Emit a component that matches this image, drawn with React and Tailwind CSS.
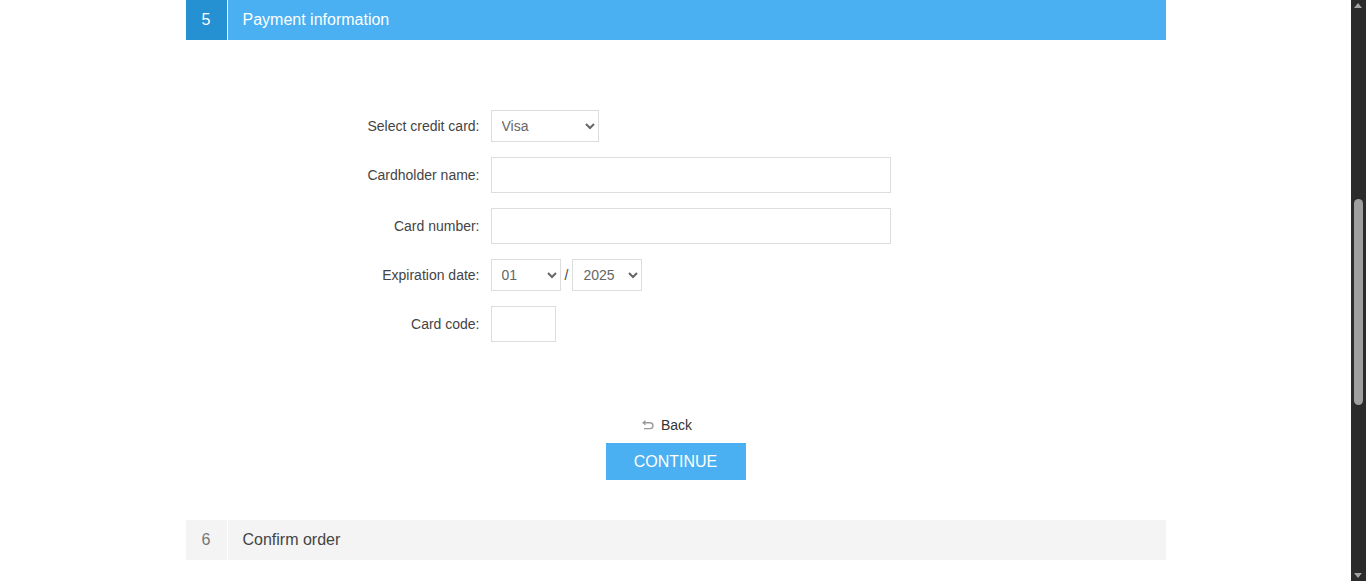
import React from 'react';

const labelCls = 'w-[305px] pr-[11px] text-right text-[14px] text-[#444]';
const inputCls = 'h-[36px] border border-[#ddd] bg-white px-2 text-[14px] text-[#444] outline-none';
const selectCls = 'h-[32px] border border-[#ddd] bg-white pl-[6px] text-[14px] text-[#666] outline-none';

const FormRow = ({ label, children }) => (
  <div className="flex items-center">
    <label className={labelCls}>{label}</label>
    {children}
  </div>
);

const BackIcon = () => (
  <svg width="12" height="10" viewBox="0 0 12 10" fill="none" stroke="#999" strokeWidth="1.4">
    <path d="M3.5 0.8 L1.2 2.8 L3.5 4.8" />
    <path d="M1.2 2.8 H8 A2.9 2.9 0 0 1 8 8.6 H2" />
  </svg>
);

const Scrollbar = () => (
  <div className="relative w-[15px] shrink-0 bg-[#2b2b2b]">
    <div className="absolute left-[3px] top-[3px] h-0 w-0 border-x-[4.5px] border-b-[5px] border-x-transparent border-b-[#a3a3a3]" />
    <div className="absolute left-[3px] top-[199px] h-[206px] w-[9px] rounded-[5px] bg-[#9f9f9f]" />
    <div className="absolute bottom-[3px] left-[3px] h-0 w-0 border-x-[4.5px] border-t-[5px] border-x-transparent border-t-[#a3a3a3]" />
  </div>
);

export default function App() {
  return (
    <div className="flex h-[581px] w-full overflow-hidden bg-white" style={{ fontFamily: '"Liberation Sans", Arial, sans-serif' }}>
      <div className="flex-1">
        <div className="mx-auto w-[980px]">
          {/* active step */}
          <div className="flex h-[40px] bg-[#4ab0f1]">
            <div className="flex w-[42px] items-center justify-center border-r border-white bg-[#2590d2] text-[16px] text-white">5</div>
            <div className="flex items-center pl-[15px] text-[16px] text-white">Payment information</div>
          </div>

          <div className="flex flex-col gap-[15px] pt-[70px]">
            <FormRow label="Select credit card:">
              <select className={`${selectCls} w-[108px]`} defaultValue="visa">
                <option value="visa">Visa</option>
                <option value="mc">Master card</option>
                <option value="amex">Amex</option>
                <option value="discover">Discover</option>
              </select>
            </FormRow>
            <FormRow label="Cardholder name:">
              <input type="text" className={`${inputCls} w-[400px]`} />
            </FormRow>
            <FormRow label="Card number:">
              <input type="text" className={`${inputCls} w-[400px]`} />
            </FormRow>
            <FormRow label="Expiration date:">
              <select className={`${selectCls} w-[70px]`} defaultValue="01">
                {['01', '02', '03', '04', '05', '06', '07', '08', '09', '10', '11', '12'].map((m) => (
                  <option key={m} value={m}>{m}</option>
                ))}
              </select>
              <span className="px-[4px] text-[14px] text-[#444]">/</span>
              <select className={`${selectCls} w-[70px]`} defaultValue="2025">
                {['2025', '2026', '2027', '2028', '2029', '2030'].map((y) => (
                  <option key={y} value={y}>{y}</option>
                ))}
              </select>
            </FormRow>
            <FormRow label="Card code:">
              <input type="text" className={`${inputCls} w-[65px]`} />
            </FormRow>
          </div>

          <div className="flex flex-col items-center pt-[74px]">
            <a href="#" className="flex items-center gap-[7px] pr-[17px] text-[14px] leading-[18px] text-[#333]">
              <BackIcon />
              <span>Back</span>
            </a>
            <button className="mt-[9px] h-[37px] w-[140px] bg-[#4ab0f1] text-[16px] uppercase text-white">Continue</button>
          </div>

          {/* next step */}
          <div className="mt-[40px] flex h-[40px] bg-[#f4f4f4]">
            <div className="flex w-[42px] items-center justify-center border-r border-white text-[16px] text-[#777]">6</div>
            <div className="flex items-center pl-[15px] text-[16px] text-[#444]">Confirm order</div>
          </div>
        </div>
      </div>
      <Scrollbar />
    </div>
  );
}
